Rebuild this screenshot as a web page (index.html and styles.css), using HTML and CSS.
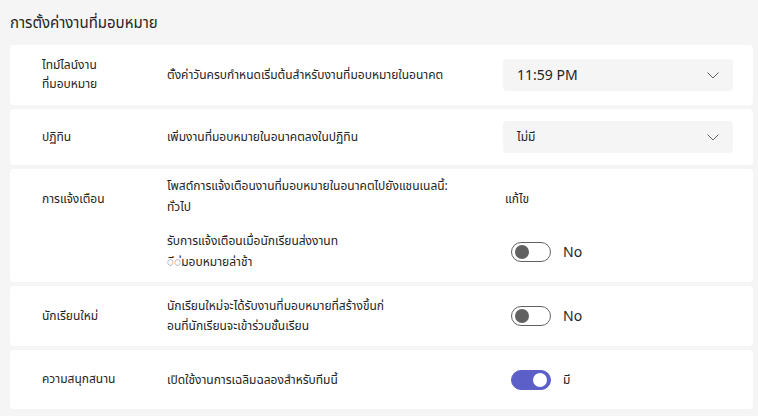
FILE: index.html
```html
<!DOCTYPE html>
<html lang="th">
<head>
<meta charset="utf-8">
<link rel="stylesheet" href="styles.css">
</head>
<body>
<div class="page">
  <h1 class="title">การตั้งค่างานที่มอบหมาย</h1>

  <div class="card card-tall">
    <div class="label">ไทม์ไลน์งาน<br>ที่มอบหมาย</div>
    <div class="desc">ตั้งค่าวันครบกำหนดเริ่มต้นสำหรับงานที่มอบหมายในอนาคต</div>
    <div class="control">
      <div class="dropdown"><span class="dd-value">11:59 PM</span>
        <svg class="chev" width="12" height="7" viewBox="0 0 12 7"><path d="M0.5 0.5 L6 6 L11.5 0.5" fill="none" stroke="#616161" stroke-width="1"/></svg>
      </div>
    </div>
  </div>

  <div class="card card-short">
    <div class="label">ปฏิทิน</div>
    <div class="desc">เพิ่มงานที่มอบหมายในอนาคตลงในปฏิทิน</div>
    <div class="control">
      <div class="dropdown"><span class="dd-value dd-th">ไม่มี</span>
        <svg class="chev" width="12" height="7" viewBox="0 0 12 7"><path d="M0.5 0.5 L6 6 L11.5 0.5" fill="none" stroke="#616161" stroke-width="1"/></svg>
      </div>
    </div>
  </div>

  <div class="card card-notify">
    <div class="label label-top">การแจ้งเตือน</div>
    <div class="rows">
      <div class="row">
        <div class="desc">โพสต์การแจ้งเตือนงานที่มอบหมายในอนาคตไปยังแชนเนลนี้:<br>ทั่วไป</div>
        <div class="control"><span class="edit">แก้ไข</span></div>
      </div>
      <div class="row">
        <div class="desc">รับการแจ้งเตือนเมื่อนักเรียนส่งงานท<br>◌ี◌่มอบหมายล่าช้า</div>
        <div class="control"><span class="toggle"><span class="knob"></span></span><span class="state">No</span></div>
      </div>
    </div>
  </div>

  <div class="card card-tall">
    <div class="label">นักเรียนใหม่</div>
    <div class="desc">นักเรียนใหม่จะได้รับงานที่มอบหมายที่สร้างขึ้นก่<br>อนที่นักเรียนจะเข้าร่วมชั้นเรียน</div>
    <div class="control"><span class="toggle"><span class="knob"></span></span><span class="state">No</span></div>
  </div>

  <div class="card card-fun">
    <div class="label">ความสนุกสนาน</div>
    <div class="desc">เปิดใช้งานการเฉลิมฉลองสำหรับทีมนี้</div>
    <div class="control"><span class="toggle on"><span class="knob"></span></span><span class="state state-th">มี</span></div>
  </div>
</div>
</body>
</html>
```
FILE: styles.css
```css
html, body {
  margin: 0;
  padding: 0;
  background: #f5f5f5;
}
body {
  font-family: "Segoe UI", "Leelawadee UI", "Noto Sans Thai", "Noto Sans", "DejaVu Sans", sans-serif;
  color: #242424;
  font-size: 12px;
}
.page {
  padding: 12px 5px 5px 10px;
  display: flex;
  flex-direction: column;
  gap: 4px;
}
.title {
  margin: 0 0 5px 0;
  font-size: 15px;
  font-weight: 400;
  line-height: 24px;
  height: 24px;
}
.card {
  background: #ffffff;
  border-radius: 4px;
  display: flex;
  align-items: center;
  padding-left: 32px;
  box-sizing: border-box;
}
.card-tall { height: 60px; }
.card-short { height: 56px; }
.card-fun { height: 59px; }
.card-notify {
  height: 113px;
  align-items: flex-start;
  padding-top: 7px;
}
.card-notify .desc { line-height: 21px; }
.label {
  width: 125px;
  flex: none;
  line-height: 19px;
  white-space: nowrap;
}
.label-top {
  margin-top: 14px;
}
.desc {
  width: 336px;
  flex: none;
  line-height: 20px;
  white-space: nowrap;
}
.control {
  display: flex;
  align-items: center;
}
.rows {
  display: flex;
  flex-direction: column;
  gap: 13px;
}
.row {
  display: flex;
  align-items: center;
}
.dropdown {
  width: 230px;
  height: 32px;
  background: #f5f5f5;
  border-radius: 4px;
  display: flex;
  align-items: center;
  justify-content: space-between;
  padding: 0 14px 0 14px;
  box-sizing: border-box;
}
.dd-value {
  font-size: 14px;
}
.dd-value.dd-th { font-size: 12px; }
.chev { display: block; }
.edit {
  margin-left: 2px;
  margin-top: 3px;
}
.toggle {
  margin-left: 8px;
  width: 40px;
  height: 20px;
  border: 1px solid #616161;
  border-radius: 10px;
  box-sizing: border-box;
  display: flex;
  align-items: center;
  padding: 0 3px;
}
.knob {
  width: 14px;
  height: 14px;
  border-radius: 50%;
  background: #616161;
}
.toggle.on {
  background: #5b5fc7;
  border-color: #5b5fc7;
  justify-content: flex-end;
}
.toggle.on .knob { background: #ffffff; }
.state {
  margin-left: 12px;
  font-size: 14px;
}
.state-th { font-size: 12px; }
```
